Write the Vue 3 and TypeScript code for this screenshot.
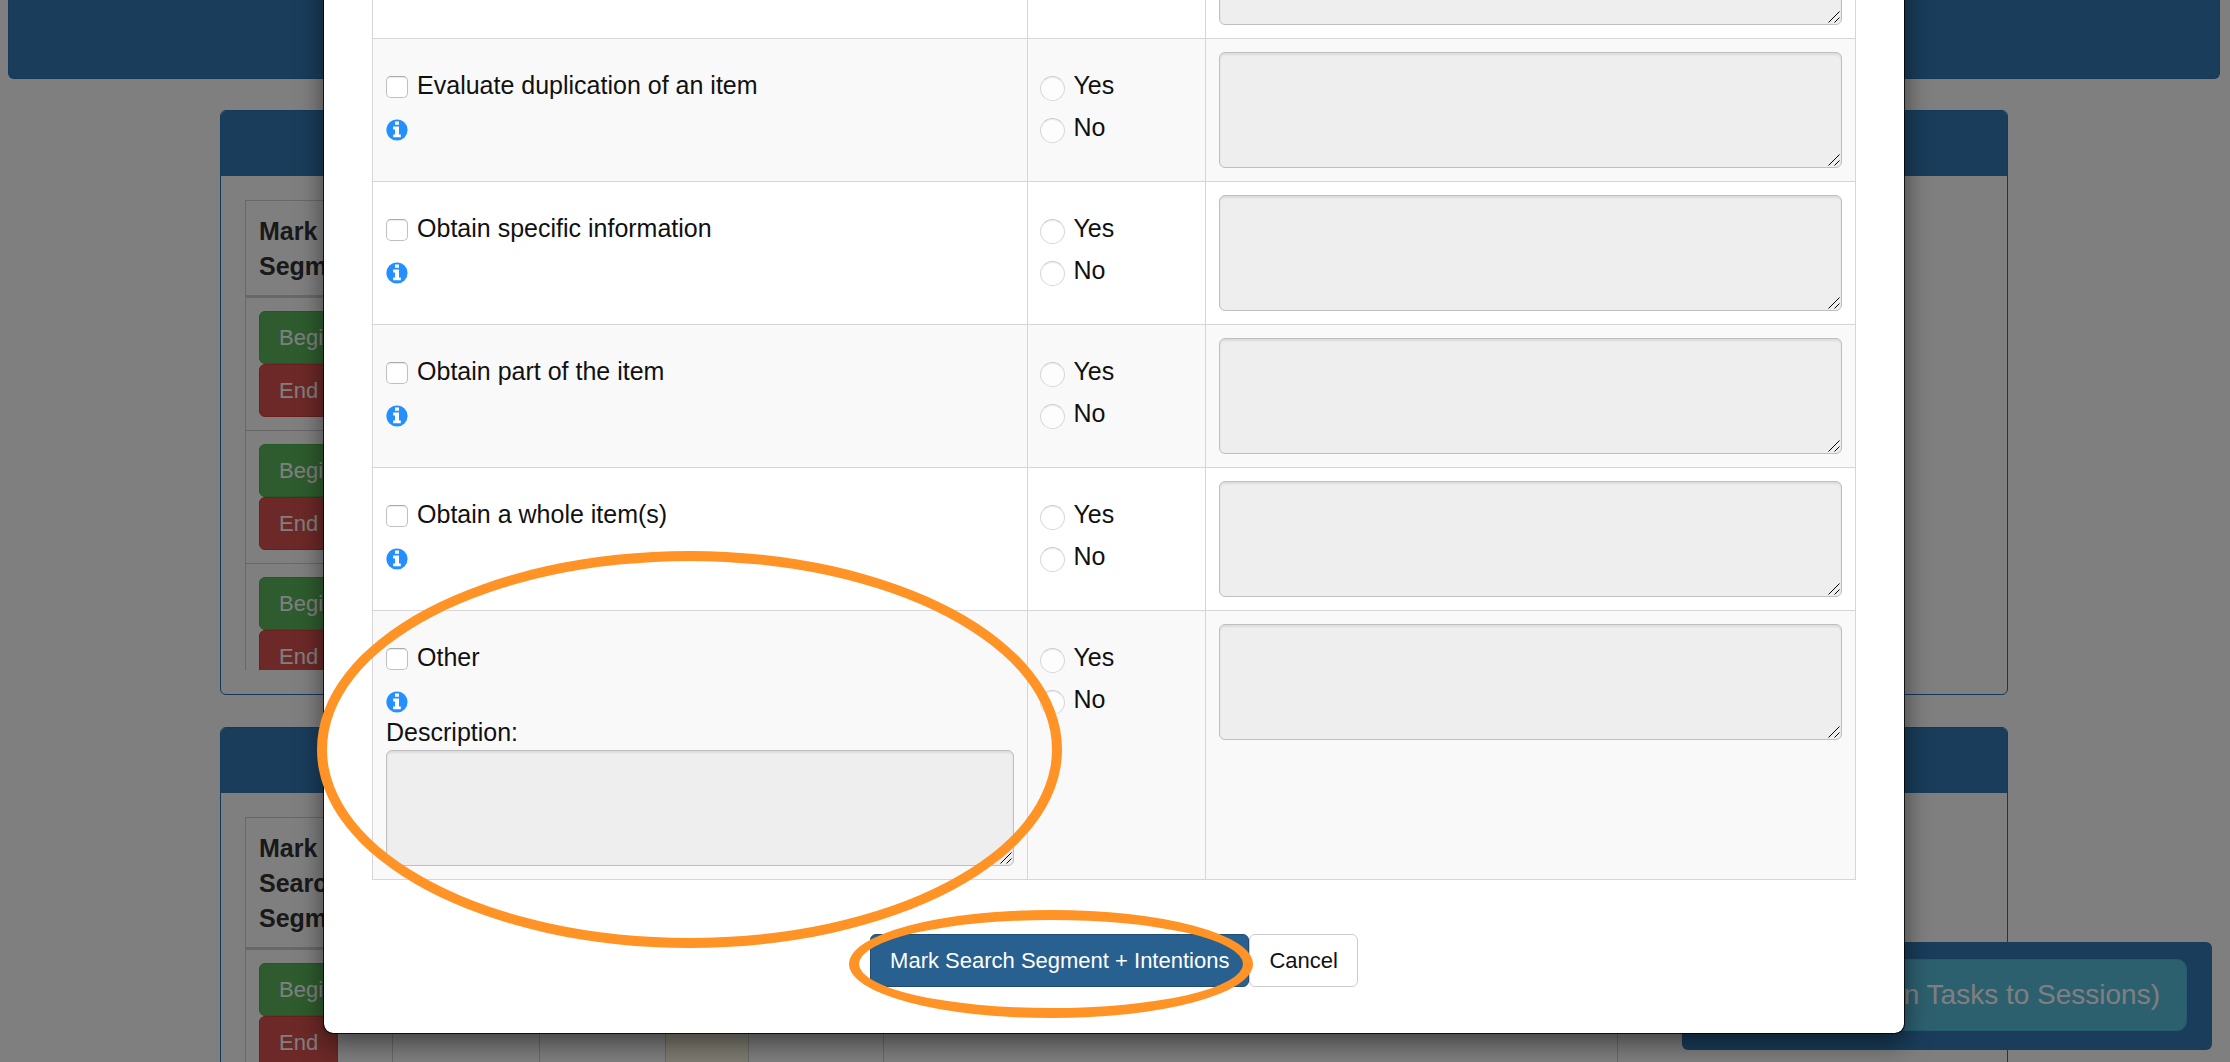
<script setup lang="ts">
interface Intention {
  id: string
  label: string
  describe?: boolean
}

interface SegmentPanel {
  id: string
  heading: string
  rows: number
}

const intentions: Intention[] = [
  { id: 'previous', label: '' },
  { id: 'duplication', label: 'Evaluate duplication of an item' },
  { id: 'specific', label: 'Obtain specific information' },
  { id: 'part', label: 'Obtain part of the item' },
  { id: 'whole', label: 'Obtain a whole item(s)' },
  { id: 'other', label: 'Other', describe: true },
]

const panels: SegmentPanel[] = [
  { id: 'segments', heading: 'Mark Segment', rows: 3 },
  { id: 'search', heading: 'Mark Search Segment', rows: 1 },
]
</script>

<template>
  <div class="screen">
    <div class="page">
      <header class="banner"></header>
      <section v-for="panel in panels" :key="panel.id" class="panel">
        <div class="panel-heading"></div>
        <div class="panel-body">
          <div class="scroller">
            <table class="segments">
              <colgroup>
                <col class="c-mark" /><col class="c-mark" /><col class="c-mid" />
                <col class="c-flag" /><col class="c-wide" /><col />
              </colgroup>
              <thead>
                <tr>
                  <th>{{ panel.heading }}</th>
                  <th v-for="n in 5" :key="n"></th>
                </tr>
              </thead>
              <tbody>
                <tr v-for="row in panel.rows" :key="row">
                  <td>
                    <button type="button" class="btn begin">Begin</button>
                    <button type="button" class="btn end">End</button>
                  </td>
                  <td v-for="n in 5" :key="n" :class="{ flagged: n === 3 }"></td>
                </tr>
              </tbody>
            </table>
          </div>
        </div>
      </section>
      <div class="next-bar">
        <button type="button" class="next">(Assign Tasks to Sessions)</button>
      </div>
    </div>

    <div class="backdrop"></div>

    <div class="modal-layer">
      <form class="modal" @submit.prevent>
        <table class="intentions">
          <colgroup>
            <col class="c-intent" /><col class="c-answer" /><col />
          </colgroup>
          <tbody>
            <tr v-for="item in intentions" :key="item.id">
              <td class="intent">
                <template v-if="item.label">
                  <label class="choice">
                    <input type="checkbox" :name="item.id" />
                    {{ item.label }}
                  </label>
                  <div class="info">
                    <svg viewBox="0 0 22 22" width="22" height="22" aria-hidden="true">
                      <circle cx="11" cy="11" r="10.6" fill="#2490ff" />
                      <path d="M9 2.6h4v3.2H9zM7.2 7.6h5.8v7.8h1.8v2.8H7.2v-2.8H9v-5H7.2z" fill="#fff" />
                    </svg>
                  </div>
                </template>
                <template v-if="item.describe">
                  <label class="describe" for="other-description">Description:</label>
                  <div class="field">
                    <textarea id="other-description" disabled></textarea>
                    <svg class="grip" viewBox="0 0 12 12" width="12" height="12" aria-hidden="true">
                      <path d="M.5 11.5l11-11M6.5 11.5l5-5" />
                    </svg>
                  </div>
                  <span class="ring ring-other"></span>
                </template>
              </td>
              <td>
                <label class="choice answer"><input type="radio" :name="item.id + '-met'" value="yes" />Yes</label>
                <label class="choice answer"><input type="radio" :name="item.id + '-met'" value="no" />No</label>
              </td>
              <td>
                <div class="field">
                  <textarea :aria-label="item.label" disabled></textarea>
                  <svg class="grip" viewBox="0 0 12 12" width="12" height="12" aria-hidden="true">
                    <path d="M.5 11.5l11-11M6.5 11.5l5-5" />
                  </svg>
                </div>
              </td>
            </tr>
          </tbody>
        </table>
        <div class="actions">
          <div class="marked">
            <button type="submit" class="btn submit">Mark Search Segment + Intentions</button>
            <span class="ring ring-submit"></span>
          </div>
          <button type="button" class="btn cancel">Cancel</button>
        </div>
      </form>
    </div>
  </div>
</template>

<style>
body {
  margin: 0;
  background: #fff;
}
</style>

<style scoped>
.screen {
  position: relative;
  height: 100vh;
  overflow: hidden;
  box-sizing: border-box;
  padding-right: 2px;
  font-family: "Liberation Sans", Arial, sans-serif;
  font-size: 25px;
  line-height: 35px;
  color: #333;
}
.screen * {
  box-sizing: border-box;
}
.banner {
  height: 79px;
  margin: 0 8px 31px;
  background: #337ab7;
  border: 1px solid #2673b8;
  border-top: 0;
  border-radius: 0 0 6px 6px;
}
.panel {
  width: 90%;
  max-width: 1788px;
  margin: 0 auto 32px;
  border: 1px solid #2673b8;
  border-radius: 6px;
  overflow: hidden;
}
.panel-heading {
  height: 65px;
  background: #337ab7;
}
.panel-body {
  padding: 24px;
}
.scroller {
  max-height: 470px;
  overflow: hidden;
}
table {
  border-collapse: collapse;
  table-layout: fixed;
}
.segments {
  width: 79%;
}
.c-mark {
  width: 147px;
}
.c-mid {
  width: 126px;
}
.c-flag {
  width: 83px;
}
.c-wide {
  width: 135px;
}
.segments th,
.segments td {
  padding: 13px;
  border: 1px solid #d0d0d0;
  vertical-align: top;
  text-align: left;
}
.segments th {
  padding: 13px 13px 11px;
  border-bottom-width: 3px;
}
.segments .flagged {
  background: #fcf8e3;
}
.btn {
  display: block;
  height: 53px;
  padding: 0 19px;
  border: 1px solid;
  border-radius: 6px;
  font: 22px/35px "Liberation Sans", Arial, sans-serif;
  white-space: nowrap;
}
.begin {
  color: #fff;
  background: #5cb85c;
  border-color: #4cae4c;
}
.end {
  color: #fff;
  background: #d9534f;
  border-color: #d43f3a;
}
.next-bar {
  position: absolute;
  right: 18px;
  bottom: 12px;
  display: flex;
  justify-content: flex-end;
  width: 530px;
  padding: 17px 25px 19px;
  background: #337ab7;
  border-radius: 6px;
}
.next {
  flex: 1;
  height: 72px;
  padding: 0 26px;
  text-align: right;
  color: #fff;
  background: #5bc0de;
  border: 1px solid #46b8da;
  border-radius: 10px;
  font: 28px/36px "Liberation Sans", Arial, sans-serif;
}
.backdrop {
  position: absolute;
  inset: 0;
  background: rgba(0, 0, 0, 0.5);
}
.modal-layer {
  position: absolute;
  inset: 0 2px 0 0;
  display: flex;
  flex-direction: column;
  justify-content: flex-end;
  align-items: center;
  padding-bottom: 28px;
}
.modal {
  flex: none;
  width: 71%;
  padding: 48px 48px 46px;
  background: #fff;
  background-clip: padding-box;
  border: 1px solid rgba(0, 0, 0, 0.8);
  border-radius: 10px;
  box-shadow: 0 9px 26px rgba(0, 0, 0, 0.5);
  color: #111;
}
.intentions {
  width: 100%;
}
.c-intent {
  width: 44.2%;
}
.c-answer {
  width: 12%;
}
.intentions td {
  padding: 13px;
  border: 1px solid #d6d6d6;
  vertical-align: top;
}
.intentions tr:nth-child(even) {
  background: #f9f9f9;
}
.intent {
  position: relative;
}
.choice {
  display: flex;
  align-items: center;
  gap: 9px;
  margin: 16px 0 14px;
}
.answer {
  gap: 8px;
  margin: 16px 0 7px;
}
.answer + .answer {
  margin: 0;
}
.choice input {
  flex: none;
  appearance: none;
  width: 22px;
  height: 22px;
  margin: 3px 0 0;
  background: #fff;
  border: 1px solid #c0c0c0;
  border-top-color: #aaa;
  border-radius: 5px;
  box-shadow: inset 0 1px 1px rgba(0, 0, 0, 0.08);
}
.choice input[type="radio"] {
  width: 25px;
  height: 25px;
  margin: 6px 0 0 -1px;
  background: rgba(255, 255, 255, 0.6);
  border-color: #d8d8d8;
  border-top-color: #ccc;
  border-radius: 50%;
}
.info {
  display: flex;
  align-items: center;
  height: 26px;
}
.describe {
  display: block;
}
.field {
  position: relative;
}
textarea {
  display: block;
  width: 100%;
  height: 116px;
  margin: 0;
  resize: none;
  background: #eee;
  border: 1px solid #bfbfbf;
  border-radius: 6px;
  box-shadow: inset 0 2px 2px rgba(0, 0, 0, 0.075);
}
.grip {
  position: absolute;
  right: 2px;
  bottom: 2px;
  fill: none;
  stroke: #000;
  stroke-width: 1;
}
.actions {
  display: flex;
  justify-content: center;
  margin-top: 54px;
}
.marked {
  position: relative;
}
.submit {
  color: #fff;
  background: #286090;
  border-color: #204d74;
}
.cancel {
  color: #111;
  background: #fff;
  border-color: #ccc;
}
.ring {
  position: absolute;
  z-index: 2;
  border: 10px solid #ff9326;
  border-radius: 50%;
  pointer-events: none;
}
.ring-other {
  inset: -60px -35px -69px -56px;
}
.ring-submit {
  inset: -24px -4px -31px -21px;
}
</style>
